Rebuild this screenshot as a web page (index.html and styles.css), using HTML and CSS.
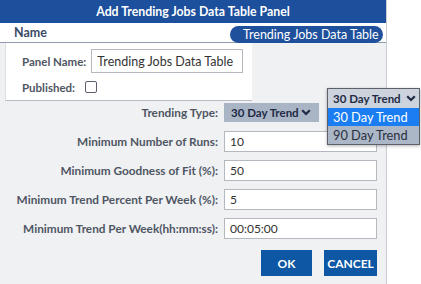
FILE: index.html
```html
<!DOCTYPE html>
<html lang="en">
<head>
  <meta charset="UTF-8" />
  <title>Add Trending Jobs Data Table Panel</title>
  <link rel="stylesheet" href="styles.css">
</head>
<body>
  <div class="dialog">
    <div class="dialog-title">Add Trending Jobs Data Table Panel</div>
    <div class="name-bar">
      <span class="name-label">Name</span>
      <span class="name-pill">Trending Jobs Data Table</span>
    </div>
    <div class="panel-box">
      <div class="panel-row">
        <label>Panel Name:</label>
        <div class="text-input wide">Trending Jobs Data Table</div>
      </div>
      <div class="panel-row">
        <label>Published:</label>
        <span class="checkbox"></span>
      </div>
    </div>
    <div class="form">
      <label class="short">Trending Type:</label>
      <div class="select">
        <span>30 Day Trend</span>
        <svg width="10" height="7" viewBox="0 0 10 7"><path d="M1.2 1.2 L5 5 L8.8 1.2" fill="none" stroke="#1f2b45" stroke-width="2.2"/></svg>
      </div>
      <label>Minimum Number of Runs:</label>
      <div class="text-input">10</div>
      <label>Minimum Goodness of Fit (%):</label>
      <div class="text-input">50</div>
      <label>Minimum Trend Percent Per Week (%):</label>
      <div class="text-input">5</div>
      <label>Minimum Trend Per Week(hh:mm:ss):</label>
      <div class="text-input">00:05:00</div>
    </div>
    <div class="actions">
      <button class="btn ok">OK</button>
      <button class="btn cancel">CANCEL</button>
    </div>
  </div>

  <div class="dropdown">
    <div class="dropdown-head">
      <span>30 Day Trend</span>
      <svg width="10" height="7" viewBox="0 0 10 7"><path d="M1.2 1.2 L5 5 L8.8 1.2" fill="none" stroke="#1f2b45" stroke-width="2.2"/></svg>
    </div>
    <div class="dropdown-option active">30 Day Trend</div>
    <div class="dropdown-option">90 Day Trend</div>
  </div>
</body>
</html>
```

FILE: styles.css
```css
body {
  margin: 0;
  font-family: 'Lato', 'Open Sans', sans-serif;
  background-color: #fff;
  color: #333;
  width: 421px;
  height: 284px;
  overflow: hidden;
  position: relative;
  white-space: nowrap;
}
.dialog {
  width: 386px;
  height: 284px;
  background-color: #eff1f3;
  border-right: 1px solid #c9ccd1;
  display: flex;
  flex-direction: column;
}
.dialog-title {
  flex: none;
  height: 23px;
  background-color: #1c4f9c;
  color: #fff;
  font-weight: bold;
  font-size: 12.3px;
  display: flex;
  align-items: center;
  justify-content: center;
}
.name-bar {
  flex: none;
  height: 19px;
  background-color: #fff;
  border-bottom: 1px solid #8e9bb0;
  display: flex;
  align-items: center;
  justify-content: space-between;
  padding: 0 3px 0 14px;
}
.name-label {
  font-size: 12.5px;
  font-weight: bold;
  color: #3a4a66;
}
.name-pill {
  height: 17px;
  width: 153px;
  box-sizing: border-box;
  padding-left: 13px;
  background-color: #1e509c;
  color: #fff;
  font-size: 12.5px;
  border-radius: 9px;
  display: flex;
  align-items: center;
  position: relative;
  top: 2px;
}
.panel-box {
  flex: none;
  margin-left: 5px;
  width: 247px;
  height: 58px;
  background-color: #fff;
  border-left: 1px solid #dde0e4;
  border-bottom: 1px solid #b7bcc4;
  padding: 6px 0 0 16px;
  box-sizing: border-box;
}
.panel-row {
  display: flex;
  align-items: center;
  gap: 5px;
  height: 24px;
  margin-bottom: 2px;
}
.panel-row label {
  font-size: 11.5px;
  font-weight: bold;
  color: #4f5663;
}
.checkbox {
  width: 10px;
  height: 10px;
  border: 1px solid #59606b;
  border-radius: 2px;
  margin-left: 5px;
}
.text-input {
  width: 153px;
  height: 21px;
  box-sizing: border-box;
  border: 1px solid #b5b9bf;
  background-color: #fff;
  font-size: 12px;
  color: #333;
  padding-left: 5px;
  display: flex;
  align-items: center;
}
.text-input.wide {
  width: 152px;
  height: 24px;
  font-size: 12.5px;
}
.form {
  flex: none;
  display: grid;
  grid-template-columns: 218px 153px;
  grid-auto-rows: 21px;
  column-gap: 6px;
  row-gap: 8px;
  align-items: center;
  padding: 1px 0 0 0;
}
.form label {
  text-align: right;
  font-size: 11.8px;
  font-weight: bold;
  color: #4f5663;
}
.select {
  width: 95px;
  height: 19px;
  box-sizing: border-box;
  background-color: #a9b4c5;
  display: flex;
  align-items: center;
  justify-content: space-between;
  padding: 0 8px 0 7px;
  font-size: 11.5px;
  font-weight: bold;
  color: #1f2b45;
}
.actions {
  flex: none;
  display: flex;
  justify-content: flex-end;
  gap: 12px;
  padding: 11px 9px 0 0;
}
.btn {
  height: 26px;
  border: none;
  background-color: #0d57a4;
  color: #fff;
  font-family: inherit;
  font-size: 12px;
  font-weight: bold;
  padding: 0;
}
.btn.ok {
  width: 51px;
}
.btn.cancel {
  width: 53px;
}
.dropdown {
  position: absolute;
  left: 327px;
  top: 88px;
  width: 91px;
  border: 1px solid #5c6068;
  box-shadow: 0 1px 3px rgba(0,0,0,0.3);
  background-color: #abb6c6;
}
.dropdown-head {
  height: 19px;
  background-color: #ccd3dd;
  display: flex;
  align-items: center;
  justify-content: space-between;
  padding: 0 3px 0 5px;
  font-size: 11.5px;
  font-weight: bold;
  color: #1f2b45;
}
.dropdown-option {
  height: 18px;
  display: flex;
  align-items: center;
  padding-left: 5px;
  font-size: 12.8px;
  color: #2a3040;
}
.dropdown-option.active {
  background-color: #1a7ef2;
  color: #fff;
}
```
